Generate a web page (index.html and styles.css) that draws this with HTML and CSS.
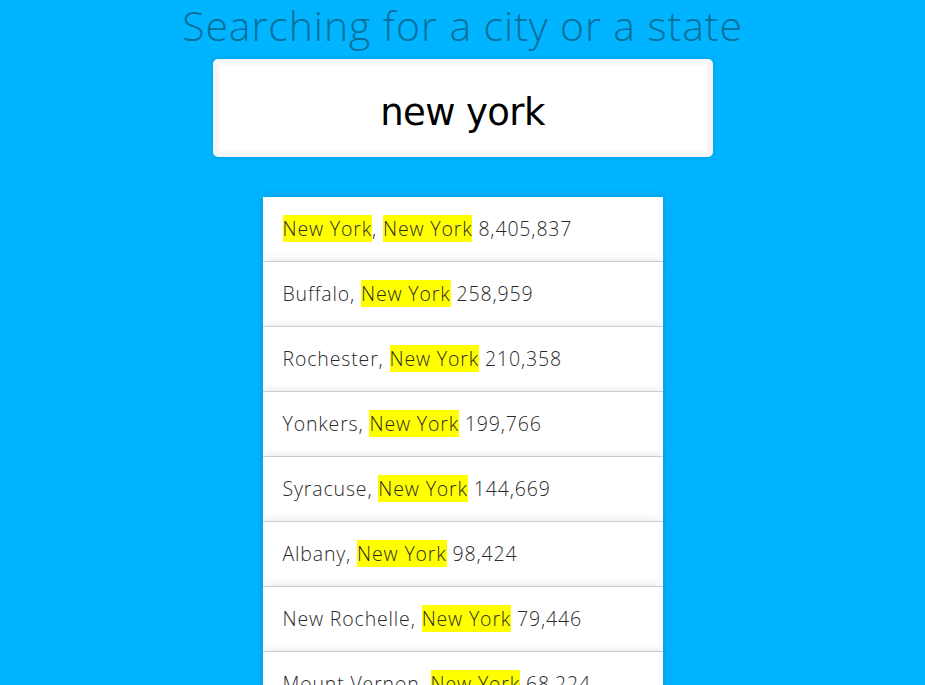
FILE: index.html
```html
<!DOCTYPE html>
<html lang="en">
<head>
<meta charset="utf-8">
<title>Type Ahead</title>
<link rel="stylesheet" href="styles.css">
</head>
<body>
<main class="page">
  <h1 class="title">Searching for a city or a state</h1>
  <form class="search-form">
    <input class="search" type="text" value="new york">
  </form>
  <ul class="suggestions">
    <li><span class="hl">New York</span>, <span class="hl">New York</span> 8,405,837</li>
    <li>Buffalo, <span class="hl">New York</span> 258,959</li>
    <li>Rochester, <span class="hl">New York</span> 210,358</li>
    <li>Yonkers, <span class="hl">New York</span> 199,766</li>
    <li>Syracuse, <span class="hl">New York</span> 144,669</li>
    <li>Albany, <span class="hl">New York</span> 98,424</li>
    <li>New Rochelle, <span class="hl">New York</span> 79,446</li>
    <li>Mount Vernon, <span class="hl">New York</span> 68,224</li>
    <li>Schenectady, <span class="hl">New York</span> 65,902</li>
  </ul>
</main>
</body>
</html>
```
FILE: styles.css
```css
html {
  background: #00b4ff;
}
body {
  margin: 0;
  font-family: "Open Sans", "Liberation Sans", sans-serif;
  font-weight: 300;
  overflow: hidden;
}
.page {
  display: flex;
  flex-direction: column;
  align-items: center;
}
.title {
  margin: 0;
  padding-top: 1px;
  font-size: 41px;
  line-height: 48px;
  font-weight: 300;
  color: #0a6f99;
  letter-spacing: 0.9px;
}
.search-form {
  margin: 10px 0 0;
  width: 500px;
}
.search {
  box-sizing: border-box;
  display: block;
  width: 500px;
  height: 98px;
  margin: 0;
  border: 5px solid #f5f5f5;
  border-radius: 5px;
  background: #fff;
  outline: 0;
  text-align: center;
  font-family: "DejaVu Sans", "Noto Sans", sans-serif;
  font-size: 37px;
  font-weight: 400;
  color: #000;
  letter-spacing: -0.6px;
  padding: 8px 0 0;
  box-shadow: 0 0 5px rgba(0, 0, 0, 0.12), inset 0 0 2px rgba(0, 0, 0, 0.1);
}
.suggestions {
  margin: 40px 0 0;
  padding: 0;
  width: 400px;
  list-style: none;
}
.suggestions li {
  background: #fff;
  border-bottom: 1px solid #d8d8d8;
  box-shadow: 0 0 10px rgba(0, 0, 0, 0.14);
  padding: 20px;
  font-size: 19.5px;
  line-height: 24px;
  color: #2a2a2a;
  letter-spacing: 0.85px;
}
.hl {
  background: #ffff00;
}
```
